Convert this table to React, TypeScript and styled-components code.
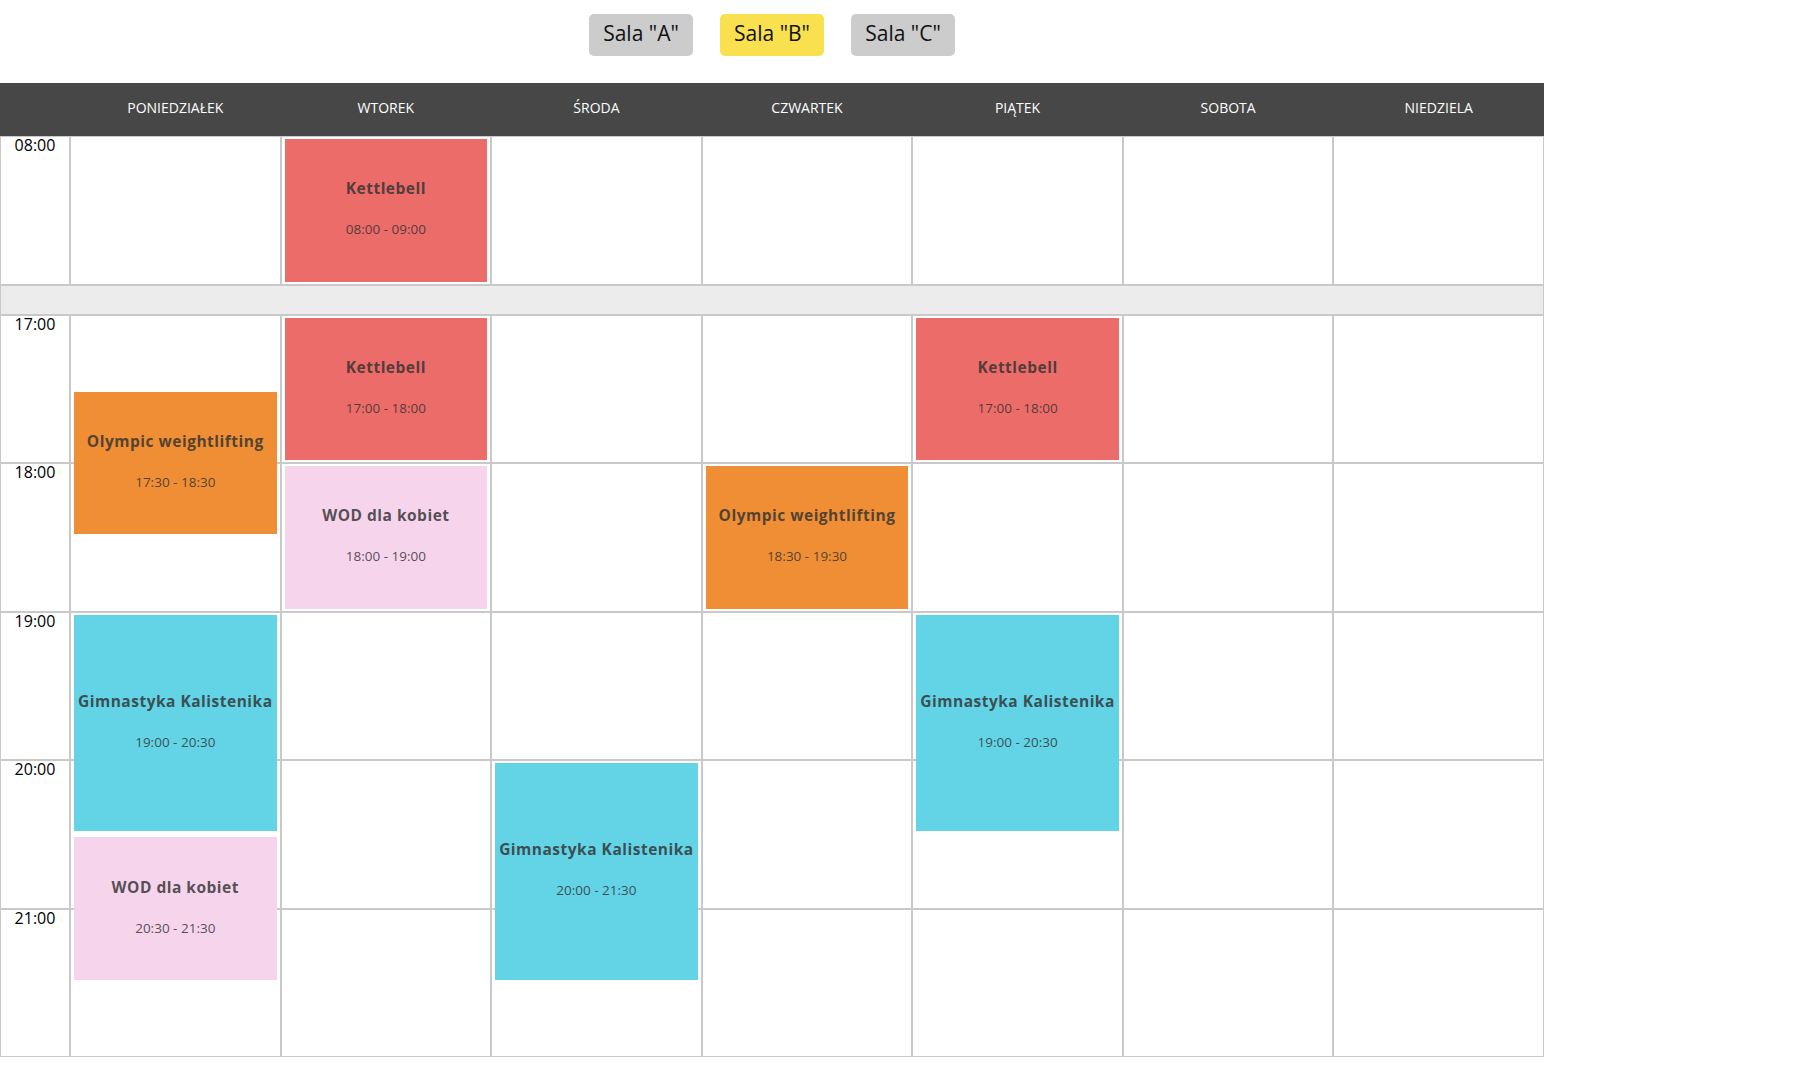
import React from "react";
import styled, { createGlobalStyle } from "styled-components";

const GlobalStyle = createGlobalStyle`
  body {
    margin: 0;
    background: #fff;
    font-family: "Open Sans", "Noto Sans", sans-serif;
  }
`;

const HOUR = 148.5;

const Page = styled.div`
  width: 1544px;
`;

const RoomBar = styled.div`
  display: flex;
  justify-content: center;
  gap: 27px;
  padding: 14px 0 27px;
`;

const RoomButton = styled.button<{ $active?: boolean }>`
  width: 104px;
  height: 42px;
  border: none;
  border-radius: 5px;
  background: ${(p) => (p.$active ? "#f8e04e" : "#cccccc")};
  color: #111;
  font-family: "Open Sans", sans-serif;
  font-size: 21px;
  padding: 0 0 4px;
  cursor: pointer;
`;

const Grid = styled.div`
  display: grid;
  grid-template-columns: 70px repeat(7, 1fr);
`;

const HeaderRow = styled(Grid)`
  height: 53px;
  background: #474747;
`;

const DayName = styled.div`
  display: flex;
  align-items: center;
  justify-content: center;
  padding-bottom: 4px;
  color: #fff;
  font-size: 14px;
`;

const HourRow = styled(Grid)`
  height: ${HOUR}px;
`;

const TimeCell = styled.div`
  border: 1px solid #c9c9c9;
  text-align: center;
  font-size: 16px;
  line-height: 16px;
  color: #000;
`;

const DayCell = styled.div`
  position: relative;
  border: 1px solid #c9c9c9;
`;

const BreakRow = styled.div`
  height: 30px;
  box-sizing: border-box;
  background: #ececec;
  border: 1px solid #c9c9c9;
`;

const EventBox = styled.div<{ $color: string }>`
  position: absolute;
  left: 3px;
  right: 3px;
  z-index: 1;
  background: ${(p) => p.$color};
  display: flex;
  flex-direction: column;
  align-items: center;
  justify-content: center;
  padding-bottom: 4px;
  box-sizing: border-box;
  color: rgba(50, 50, 50, 0.84);
`;

const EventTitle = styled.div`
  font-weight: 700;
  font-size: 15.5px;
  letter-spacing: 0.5px;
  line-height: 20px;
  white-space: nowrap;
`;

const EventTime = styled.div`
  margin-top: 22px;
  font-size: 13.5px;
  line-height: 18px;
`;

const COLORS = {
  red: "#ec6c69",
  orange: "#ef8e34",
  pink: "#f5d4ec",
  cyan: "#63d3e6",
};

const days = ["PONIEDZIAŁEK", "WTOREK", "ŚRODA", "CZWARTEK", "PIĄTEK", "SOBOTA", "NIEDZIELA"];

type Ev = {
  day: number;
  row: string;
  offset: number;
  length: number;
  title: string;
  time: string;
  color: string;
};

const events: Ev[] = [
  { day: 1, row: "08:00", offset: 0, length: 1, title: "Kettlebell", time: "08:00 - 09:00", color: COLORS.red },
  { day: 1, row: "17:00", offset: 0, length: 1, title: "Kettlebell", time: "17:00 - 18:00", color: COLORS.red },
  { day: 4, row: "17:00", offset: 0, length: 1, title: "Kettlebell", time: "17:00 - 18:00", color: COLORS.red },
  { day: 0, row: "17:00", offset: 0.5, length: 1, title: "Olympic weightlifting", time: "17:30 - 18:30", color: COLORS.orange },
  { day: 1, row: "18:00", offset: 0, length: 1, title: "WOD dla kobiet", time: "18:00 - 19:00", color: COLORS.pink },
  { day: 3, row: "18:00", offset: 0, length: 1, title: "Olympic weightlifting", time: "18:30 - 19:30", color: COLORS.orange },
  { day: 0, row: "19:00", offset: 0, length: 1.5, title: "Gimnastyka Kalistenika", time: "19:00 - 20:30", color: COLORS.cyan },
  { day: 4, row: "19:00", offset: 0, length: 1.5, title: "Gimnastyka Kalistenika", time: "19:00 - 20:30", color: COLORS.cyan },
  { day: 0, row: "20:00", offset: 0.5, length: 1, title: "WOD dla kobiet", time: "20:30 - 21:30", color: COLORS.pink },
  { day: 2, row: "20:00", offset: 0, length: 1.5, title: "Gimnastyka Kalistenika", time: "20:00 - 21:30", color: COLORS.cyan },
];

const rows = ["08:00", "break", "17:00", "18:00", "19:00", "20:00", "21:00"];

const App = () => (
  <Page>
    <GlobalStyle />
    <RoomBar>
      <RoomButton>Sala "A"</RoomButton>
      <RoomButton $active>Sala "B"</RoomButton>
      <RoomButton>Sala "C"</RoomButton>
    </RoomBar>
    <HeaderRow>
      <div />
      {days.map((d) => (
        <DayName key={d}>{d}</DayName>
      ))}
    </HeaderRow>
    {rows.map((r) =>
      r === "break" ? (
        <BreakRow key={r} />
      ) : (
        <HourRow key={r}>
          <TimeCell>{r}</TimeCell>
          {days.map((d, i) => (
            <DayCell key={d}>
              {events
                .filter((e) => e.row === r && e.day === i)
                .map((e) => (
                  <EventBox
                    key={e.title + e.time}
                    $color={e.color}
                    style={{ top: e.offset * HOUR + 2, height: e.length * HOUR - 6 }}
                  >
                    <EventTitle>{e.title}</EventTitle>
                    <EventTime>{e.time}</EventTime>
                  </EventBox>
                ))}
            </DayCell>
          ))}
        </HourRow>
      )
    )}
  </Page>
);

export default App;
